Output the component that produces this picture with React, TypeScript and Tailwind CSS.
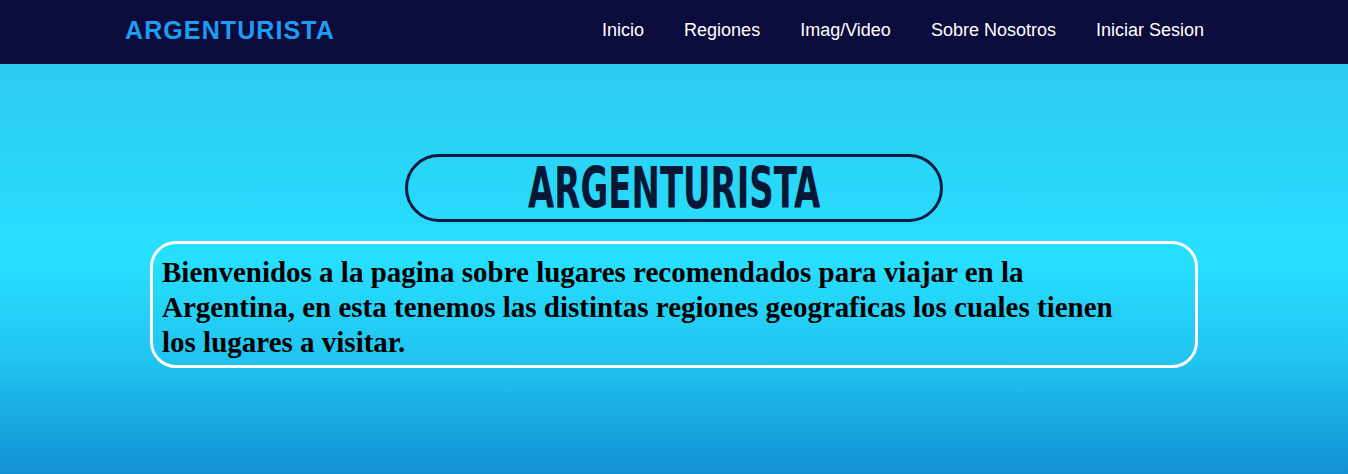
import React from "react";

const links = ["Inicio", "Regiones", "Imag/Video", "Sobre Nosotros", "Iniciar Sesion"];

export default function App() {
  return (
    <div className="min-h-screen flex flex-col font-['Liberation_Sans',Arial,sans-serif]">
      <header className="h-16 bg-[#0b0b3c] flex items-center justify-between pl-[125px] pr-[144px] pb-[3px]">
        <a href="#" className="text-[25px] font-bold tracking-[1.1px] text-[#1e9cf2]">
          ARGENTURISTA
        </a>
        <nav className="flex items-center gap-10">
          {links.map((link) => (
            <a key={link} href="#" className="text-[18px] text-white">
              {link}
            </a>
          ))}
        </nav>
      </header>

      <main className="flex-1 min-h-[410px] bg-[linear-gradient(180deg,#2ccbef_0%,#27dfff_48%,#21c4f0_72%,#1290d4_100%)] flex flex-col items-center pt-[90px]">
        <div className="w-[538px] h-[68px] rounded-full border-[3px] border-[#0a1a42] flex items-center justify-center">
          <h1 className="font-['Impact','Liberation_Sans_Narrow','DejaVu_Sans_Condensed',sans-serif] font-bold text-[46px] leading-none text-[#071735] scale-x-[0.82] scale-y-[1.22]">
            ARGENTURISTA
          </h1>
        </div>

        <div className="mt-[19px] w-[1048px] rounded-[26px] border-[3px] border-white pl-[9px] pr-[50px] pt-[11px] pb-[5px]">
          <p className="font-['Liberation_Serif','Times_New_Roman',serif] font-bold text-[29px] leading-[35px] text-black">
            Bienvenidos a la pagina sobre lugares recomendados para viajar en la Argentina, en esta
            tenemos las distintas regiones geograficas los cuales tienen los lugares a visitar.
          </p>
        </div>
      </main>
    </div>
  );
}
